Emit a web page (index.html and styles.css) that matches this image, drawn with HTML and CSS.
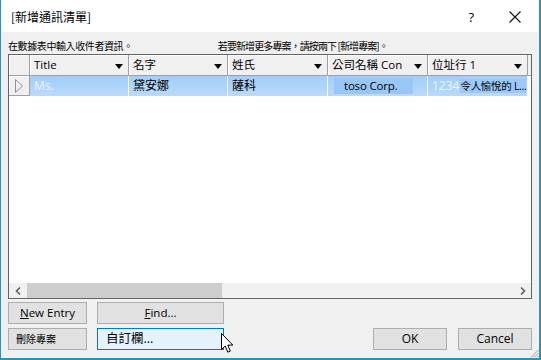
FILE: index.html
```html
<!DOCTYPE html>
<html>
<head>
<meta charset="utf-8">
<link rel="stylesheet" href="styles.css">
</head>
<body>
<div class="window">
  <div class="titlebar">
    <span class="title">[新增通訊清單]</span>
    <span class="help">?</span>
    <svg class="close" width="12" height="12" viewBox="0 0 12 12"><path d="M0.5 0.5L11.5 11.5M11.5 0.5L0.5 11.5" stroke="#111" stroke-width="1.1" fill="none"/></svg>
  </div>
  <div class="content">
    <div class="hint"><span>在數據表中輸入收件者資訊。</span><span class="hint2">若要新增更多專案，請按兩下 [新增專案]。</span></div>
    <div class="grid">
      <div class="hrow">
        <div class="sel"></div>
        <div class="hcell c1"><span>Title</span><i class="dd"></i></div>
        <div class="hcell c2"><span>名字</span><i class="dd"></i></div>
        <div class="hcell c3"><span>姓氏</span><i class="dd"></i></div>
        <div class="hcell c4"><span>公司名稱 Con</span><i class="dd"></i></div>
        <div class="hcell c5"><span>位址行 1</span><i class="dd"></i></div>
        <div class="hfill"></div>
      </div>
      <div class="drow">
        <div class="sel">
          <svg width="8" height="14" viewBox="0 0 8 14"><path d="M0.5 0.5L7.5 7L0.5 13.5Z" fill="none" stroke="#8393ab" stroke-width="1"/></svg>
        </div>
        <div class="dcell c1 faded">Ms.</div>
        <div class="dcell c2">黛安娜</div>
        <div class="dcell c3">薩科</div>
        <div class="dcell c4"><span class="mark">toso Corp.</span></div>
        <div class="dcell c5"><span class="faded">1234</span><span class="mark2">令人愉悅的 L...</span></div>
      </div>
      <div class="empty"></div>
      <div class="hscroll">
        <div class="arrow">
          <svg width="6" height="8" viewBox="0 0 6 8"><path d="M5 0.5L1.5 4L5 7.5" fill="none" stroke="#606060" stroke-width="1.6"/></svg>
        </div>
        <div class="thumb"></div>
        <div class="track"></div>
        <div class="arrow">
          <svg width="6" height="8" viewBox="0 0 6 8"><path d="M1 0.5L4.5 4L1 7.5" fill="none" stroke="#606060" stroke-width="1.6"/></svg>
        </div>
      </div>
    </div>
    <div class="buttons">
      <div class="brow">
        <button class="btn b-small"><u>N</u>ew Entry</button>
        <button class="btn b-wide"><u>F</u>ind...</button>
      </div>
      <div class="brow">
        <button class="btn b-small b-left">刪除專案</button>
        <button class="btn b-wide b-focus">自訂欄...</button>
        <div class="spacer"></div>
        <button class="btn b-ok">OK</button>
        <button class="btn b-ok">Cancel</button>
      </div>
    </div>
  </div>
  <svg class="cursor" width="14" height="21" viewBox="0 0 14 21"><path d="M0.5 0.5L0.5 16.5L4.2 13L6.8 19.2L9.3 18.1L6.8 12.1L11.8 12.1Z" fill="#fff" stroke="#000" stroke-width="1" stroke-linejoin="miter"/></svg>
  <svg class="grip" width="9" height="9" viewBox="0 0 9 9"><path d="M8.5 1L1 8.5M8.5 4L4 8.5M8.5 7L7 8.5" stroke="#a0a0a0" stroke-width="1" fill="none"/></svg>
</div>
</body>
</html>
```

FILE: styles.css
```css
html, body {
  margin: 0;
  padding: 0;
  width: 541px;
  height: 360px;
  overflow: hidden;
  background: #fff;
}

.window {
  position: relative;
  box-sizing: border-box;
  width: 541px;
  height: 360px;
  background: #f0f0f0;
  border-left: 1px solid #2a94b4;
  border-right: 2px solid #2a94b4;
  border-bottom: 2px solid #2a94b4;
  display: flex;
  flex-direction: column;
  font-family: "Open Sans", "Noto Sans CJK TC", sans-serif;
  color: #000;
}

.titlebar {
  height: 32px;
  background: #fff;
  display: flex;
  align-items: center;
  padding-left: 10px;
  flex: none;
}

.title {
  font-family: "Noto Sans CJK TC", sans-serif;
  font-size: 12px;
  line-height: 14px;
  margin-top: 1px;
}

.help {
  margin-left: auto;
  font-family: "Open Sans", sans-serif;
  font-size: 13px;
  line-height: 14px;
  margin-right: 35px;
  margin-top: 1px;
}

.close {
  margin-right: 18px;
  margin-top: 1px;
}

.content {
  flex: 1;
  display: flex;
  flex-direction: column;
  padding: 0 7px 0 7px;
}

.hint {
  margin-top: 8px;
  height: 12px;
  font-family: "Noto Sans CJK TC", sans-serif;
  font-size: 10px;
  line-height: 12px;
  white-space: nowrap;
  display: flex;
  letter-spacing: -0.4px;
}

.hint2 {
  margin-left: 85px;
  letter-spacing: -0.9px;
}

.grid {
  margin-top: 2px;
  height: 245px;
  box-sizing: border-box;
  border: 1px solid #646464;
  background: #fff;
  display: flex;
  flex-direction: column;
}

.hrow {
  display: flex;
  height: 21px;
  flex: none;
  background: #f0f0f0;
}

.drow {
  display: flex;
  height: 20px;
  flex: none;
}

.sel {
  width: 21px;
  flex: none;
  box-sizing: border-box;
  background: #f0f0f0;
  border-right: 1px solid #a0a0a0;
  border-bottom: 1px solid #a0a0a0;
  box-shadow: inset 1px 1px 0 #fff;
  display: flex;
  align-items: center;
  padding-left: 6px;
}

.c1, .c2 { width: 99px; }
.c3, .c4, .c5 { width: 100px; }

.hcell {
  flex: none;
  box-sizing: border-box;
  border-right: 1px solid #a0a0a0;
  border-bottom: 1px solid #a0a0a0;
  box-shadow: inset 1px 1px 0 #fff;
  display: flex;
  align-items: center;
  padding: 0 5px 0 4px;
  font-size: 11.5px;
  line-height: 14px;
  white-space: nowrap;
  overflow: hidden;
}

.hcell span {
  flex: 1;
  overflow: hidden;
}

.dd {
  width: 0;
  height: 0;
  border-left: 4.5px solid transparent;
  border-right: 4.5px solid transparent;
  border-top: 5px solid #000;
  margin-top: 2px;
}

.hfill {
  flex: 1;
  border-bottom: 1px solid #a0a0a0;
}

.dcell {
  flex: none;
  box-sizing: border-box;
  background: linear-gradient(#a3cdf8, #b8dafb);
  border-right: 1px solid #fff;
  display: flex;
  align-items: center;
  padding-left: 4px;
  font-size: 12px;
  line-height: 14px;
  white-space: nowrap;
  overflow: hidden;
}

.faded {
  color: #eef5ff;
}

.mark {
  background: #98c7f5;
  padding: 1px 16px 1px 10px;
  margin-left: 2px;
  font-size: 11.5px;
  letter-spacing: -0.2px;
}

.mark2 {
  background: #9cc9f6;
  margin-left: 1px;
  font-size: 10.5px;
  letter-spacing: -0.3px;
}

.empty {
  flex: 1;
}

.hscroll {
  height: 15px;
  flex: none;
  display: flex;
  background: #f0f0f0;
}

.arrow {
  width: 17px;
  flex: none;
  display: flex;
  align-items: center;
  justify-content: center;
}

.thumb {
  width: 195px;
  margin-left: 1px;
  background: #cdcdcd;
}

.track {
  flex: 1;
}

.buttons {
  margin-top: 3px;
  display: flex;
  flex-direction: column;
  gap: 4px;
}

.brow {
  display: flex;
  gap: 10px;
  align-items: center;
}

.spacer {
  flex: 1;
}

.btn {
  height: 22px;
  box-sizing: border-box;
  margin: 0;
  background: #e1e1e1;
  border: 1px solid #adadad;
  font-family: "Open Sans", "Noto Sans CJK TC", sans-serif;
  font-size: 11.5px;
  line-height: 14px;
  color: #000;
  padding: 0;
  white-space: nowrap;
}

.b-small {
  width: 79px;
}

.b-wide {
  width: 127px;
}

.b-left {
  text-align: left;
  padding-left: 7px;
  font-size: 10px;
}

.b-focus {
  background: #e5f1fb;
  border-color: #0078d7;
  text-align: left;
  padding-left: 8px;
  font-size: 12.5px;
}

.b-ok {
  width: 74px;
  font-size: 12px;
}

.b-ok + .b-ok {
  margin-left: 1px;
}

.cursor {
  position: absolute;
  left: 220px;
  top: 333px;
}

.grip {
  position: absolute;
  right: 0;
  bottom: 0;
}
```
